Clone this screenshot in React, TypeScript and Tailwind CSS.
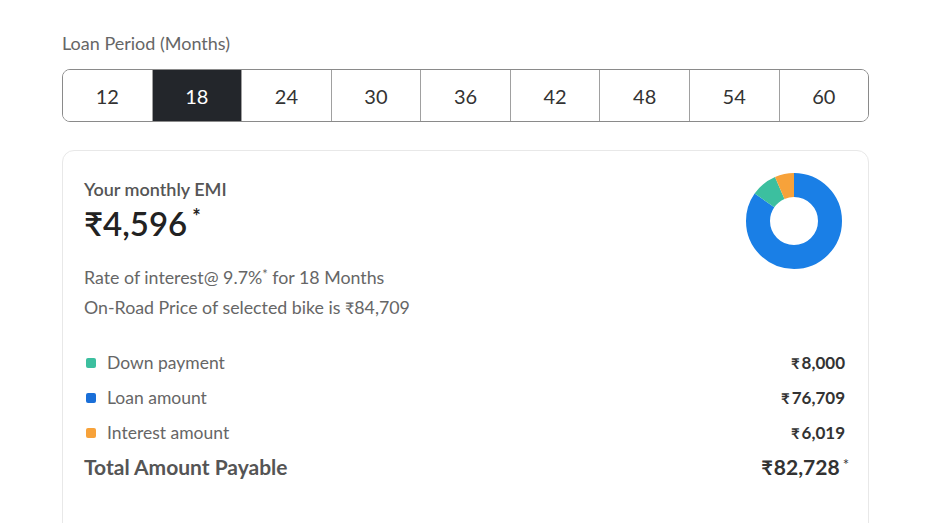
import React, { useState } from 'react';

const PERIODS = [12, 18, 24, 30, 36, 42, 48, 54, 60];

const BREAKUP = [
  { label: 'Down payment', value: 8000, color: '#3cbf9f' },
  { label: 'Loan amount', value: 76709, color: '#1a6fd8' },
  { label: 'Interest amount', value: 6019, color: '#f7a23a' },
];

const fmt = (n: number) => n.toLocaleString('en-IN');

// donut drawn clockwise from 12 o'clock: loan, down payment, interest
const Donut: React.FC = () => {
  const order = [
    { value: 76709, color: '#1a7fe6' },
    { value: 8000, color: '#3cbf9f' },
    { value: 6019, color: '#f7a23a' },
  ];
  const total = order.reduce((s, o) => s + o.value, 0);
  const r = 36;
  const c = 2 * Math.PI * r;
  let offset = 0;
  return (
    <svg width="98" height="98" viewBox="0 0 98 98">
      <g transform="rotate(-90 49 49)">
        {order.map((o, i) => {
          const len = (o.value / total) * c;
          const el = (
            <circle
              key={i}
              cx="49"
              cy="49"
              r={r}
              fill="none"
              stroke={o.color}
              strokeWidth="24"
              strokeDasharray={`${len} ${c - len}`}
              strokeDashoffset={-offset}
            />
          );
          offset += len;
          return el;
        })}
      </g>
    </svg>
  );
};

const Rupee: React.FC<{ className?: string }> = ({ className }) => (
  <span className={className}>₹</span>
);

export default function App() {
  const [period, setPeriod] = useState(18);

  return (
    <div className="w-[930px] h-[523px] overflow-hidden bg-white font-['Lato','Open_Sans',sans-serif]">
      <div className="pl-[62px] pr-[61px] pt-[31px]">
        <div className="text-[18px] text-[#666] leading-[24px]">Loan Period (Months)</div>

        <div className="mt-[14px] flex h-[53px] rounded-[8px] border border-[#8a8a8a] overflow-hidden">
          {PERIODS.map((p, i) => (
            <button
              key={p}
              onClick={() => setPeriod(p)}
              className={`flex-1 flex items-center justify-center text-[20px] ${
                i > 0 ? 'border-l border-[#a0a0a0]' : ''
              } ${p === period ? 'bg-[#23262b] text-white' : 'bg-white text-[#333]'}`}
            >
              {p}
            </button>
          ))}
        </div>

        <div className="mt-[28px] h-[400px] rounded-[12px] border border-[#e8e8e8] pl-[21px] pr-[23px] pt-[27px]">
          <div className="flex justify-between">
            <div>
              <div className="text-[18px] font-semibold text-[#555] leading-[22px]">Your monthly EMI</div>
              <div className="mt-[3px] flex items-start text-[#222]">
                <span className="text-[33px] font-semibold leading-[40px]">₹4,596</span>
                <span className="text-[20px] font-bold ml-[5px] mt-[1px] leading-[24px]">*</span>
              </div>
            </div>
            <div className="mt-[-6px] mr-[2px]">
              <Donut />
            </div>
          </div>

          <div className="mt-[-8px] text-[17.8px] text-[#666]">
            <div className="h-[30px] leading-[30px]">
              Rate of interest@ 9.7%<span className="relative top-[-5px] text-[13px] leading-none">*</span> for {period} Months
            </div>
            <div className="h-[30px] leading-[30px]">
              On-Road Price of selected bike is <Rupee className="text-[16px]" />84,709
            </div>
          </div>

          <div className="mt-[30px] flex flex-col gap-[13px]">
            {BREAKUP.map(b => (
              <div key={b.label} className="flex items-center justify-between h-[22px]">
                <div className="flex items-center">
                  <span className="ml-[2px] w-[10px] h-[10px] rounded-[2px]" style={{ backgroundColor: b.color }} />
                  <span className="ml-[11px] text-[17.5px] text-[#666]">{b.label}</span>
                </div>
                <div className="text-[17px] font-bold text-[#333]">
                  <Rupee className="text-[15px] mr-[2px]" />
                  {fmt(b.value)}
                </div>
              </div>
            ))}
          </div>

          <div className="mt-[7px] flex items-center justify-between">
            <div className="text-[21px] font-bold text-[#555]">Total Amount Payable</div>
            <div className="flex items-start text-[#333] mr-[-4px]">
              <span className="text-[21px] font-bold">
                <Rupee className="text-[20px] mr-[1px]" />82,728
              </span>
              <span className="text-[15px] ml-[3px] mt-[2px]">*</span>
            </div>
          </div>
        </div>
      </div>
    </div>
  );
}
